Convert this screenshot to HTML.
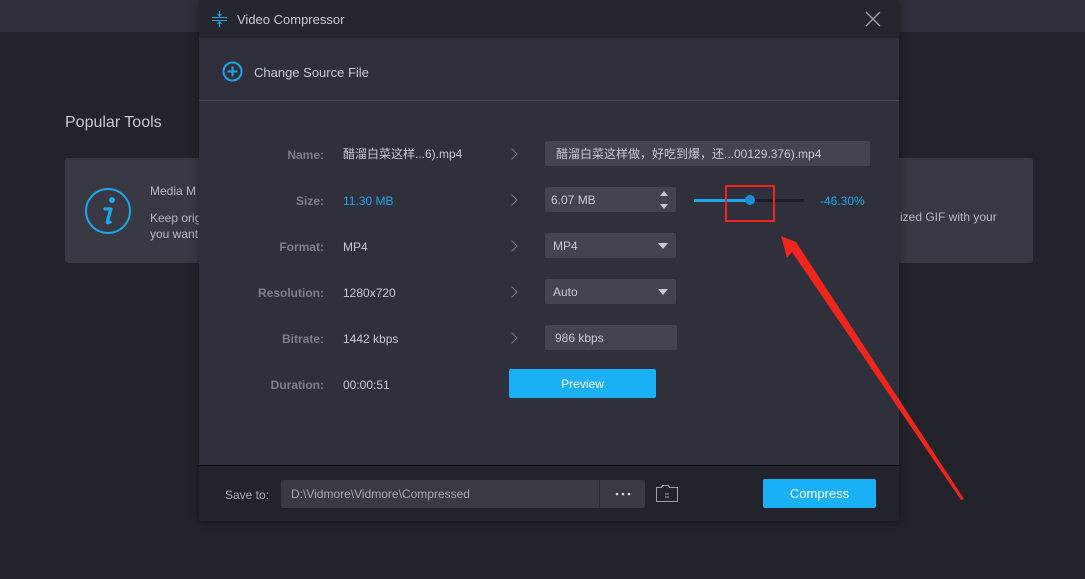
<!DOCTYPE html>
<html><head><meta charset="utf-8"><style>
*{margin:0;padding:0;box-sizing:border-box}
body{width:1085px;height:579px;background:#22232b;position:relative;overflow:hidden;font-family:"Liberation Sans","Noto Sans CJK SC",sans-serif;font-size:12px;color:#c9cad0}
.a{position:absolute}
.top{left:0;top:0;width:1085px;height:32px;background:#2f303b}
.card{left:65px;top:158px;width:968px;height:105px;background:#383942;border-radius:3px}
.dlg{left:199px;top:0;width:700px;height:521px;background:#2f303b;box-shadow:0 0 8px rgba(0,0,0,.4)}
.tb{left:0;top:0;width:700px;height:38px;background:#26272e}
.lbl{width:125px;text-align:right;font-weight:bold;color:#7e7f87;font-size:12px;line-height:14px}
.val{color:#c9cad0;line-height:14px}
.box{background:#43444e;border-radius:2px;height:25px;line-height:26px;padding-left:6px;color:#c9cad0}
.chev{width:8px;height:8px;border-right:1px solid #7e7f87;border-top:1px solid #7e7f87;transform:rotate(45deg)}
.tri{width:0;height:0;border-left:5px solid transparent;border-right:5px solid transparent;border-top:6px solid #c9cad0}
</style></head><body>
<div class="a top"></div>
<div class="a" style="left:65px;top:114px;font-size:16px;color:#c9cad0">Popular Tools</div>
<div class="a card">
 <svg class="a" style="left:20px;top:30px" width="48" height="48" viewBox="0 0 48 48"><circle cx="23" cy="23" r="22" fill="none" stroke="#1aa7ec" stroke-width="2"/><circle cx="27" cy="12" r="3" fill="#1aa7ec"/><path d="M20 21h6l-3.5 12q-1 3 2.5 1" fill="none" stroke="#1aa7ec" stroke-width="3.2" stroke-linejoin="round" stroke-linecap="round"/></svg>
 <div class="a" style="left:85px;top:26px;color:#b8b9c0">Media M</div>
 <div class="a" style="left:85px;top:52px;color:#b8b9c0;line-height:16px">Keep orig<br>you want</div>
 <div class="a" style="left:835px;top:52px;color:#b8b9c0">ized GIF with your</div>
</div>
<div class="a dlg">
 <div class="a tb"></div>
 <svg class="a" style="left:13px;top:11px" width="16" height="16" viewBox="0 0 16 16" stroke="#1aa7ec" stroke-width="1" fill="none"><path d="M0 6.5h15M0 9.5h15M7.5 0v5M5.5 3l2 2 2-2M7.5 11v5M5.5 13l2-2 2 2"/></svg>
 <div class="a" style="left:38px;top:12px;font-size:13px;color:#c9cad0">Video Compressor</div>
 <svg class="a" style="left:666px;top:11px" width="16" height="16" viewBox="0 0 16 16"><path d="M1 1L15 15M15 1L1 15" stroke="#a0a1a8" stroke-width="1.3"/></svg>
 <svg class="a" style="left:23px;top:61px" width="21" height="21" viewBox="0 0 21 21"><circle cx="10.5" cy="10.5" r="9" fill="none" stroke="#1aa7ec" stroke-width="2"/><path d="M10.5 5.5v10M5.5 10.5h10" stroke="#1aa7ec" stroke-width="2"/></svg>
 <div class="a" style="left:55px;top:65px;font-size:13px">Change Source File</div>
 <div class="a" style="left:0;top:100px;width:700px;height:1px;background:#474852"></div>

 <div class="a lbl" style="top:148px">Name:</div>
 <div class="a val" style="left:144px;top:147px">醋溜白菜这样...6).mp4</div>
 <div class="a chev" style="left:309px;top:150px"></div>
 <div class="a box" style="left:346px;top:141px;width:325px;padding-left:11px">醋溜白菜这样做，好吃到爆，还...00129.376).mp4</div>

 <div class="a lbl" style="top:194px">Size:</div>
 <div class="a val" style="left:144px;top:194px;color:#1aa7ec">11.30 MB</div>
 <div class="a chev" style="left:309px;top:196px"></div>
 <div class="a box" style="left:346px;top:187px;width:131px">6.07 MB</div>
 <div class="a" style="left:461px;top:191px;width:0;height:0;border-left:4px solid transparent;border-right:4px solid transparent;border-bottom:5px solid #c9cad0"></div>
 <div class="a" style="left:461px;top:204px;width:0;height:0;border-left:4px solid transparent;border-right:4px solid transparent;border-top:5px solid #c9cad0"></div>
 <div class="a" style="left:495px;top:199px;width:110px;height:3px;background:#1c1d22"></div>
 <div class="a" style="left:495px;top:199px;width:55px;height:3px;background:#1aa7ec"></div>
 <div class="a" style="left:546px;top:195px;width:10px;height:10px;border-radius:50%;background:#1a8fd6"></div>
 <div class="a" style="left:526px;top:185px;width:50px;height:37px;border:2px solid #f0261d"></div>
 <div class="a" style="left:621px;top:194px;color:#1aa7ec">-46.30%</div>

 <div class="a lbl" style="top:240px">Format:</div>
 <div class="a val" style="left:144px;top:240px">MP4</div>
 <div class="a chev" style="left:309px;top:242px"></div>
 <div class="a box" style="left:346px;top:233px;width:131px;padding-left:8px">MP4</div>
 <div class="a tri" style="left:459px;top:243px"></div>

 <div class="a lbl" style="top:286px">Resolution:</div>
 <div class="a val" style="left:144px;top:286px">1280x720</div>
 <div class="a chev" style="left:309px;top:288px"></div>
 <div class="a box" style="left:346px;top:279px;width:131px;padding-left:8px">Auto</div>
 <div class="a tri" style="left:459px;top:289px"></div>

 <div class="a lbl" style="top:332px">Bitrate:</div>
 <div class="a val" style="left:144px;top:332px">1442 kbps</div>
 <div class="a chev" style="left:309px;top:334px"></div>
 <div class="a box" style="left:346px;top:325px;width:132px;padding-left:10px">986 kbps</div>

 <div class="a lbl" style="top:378px">Duration:</div>
 <div class="a val" style="left:144px;top:378px">00:00:51</div>
 <div class="a" style="left:310px;top:369px;width:147px;height:29px;background:#1ab0f5;border-radius:2px;color:#fff;text-align:center;line-height:30px">Preview</div>

 <div class="a" style="left:0;top:465px;width:700px;height:56px;background:#23242b;border-top:1px solid #0e0e12"></div>
 <div class="a" style="left:26px;top:488px;color:#a9aab1">Save to:</div>
 <div class="a" style="left:82px;top:480px;width:364px;height:28px;background:#393a42;border-radius:2px;line-height:29px;padding-left:10px;color:#a9aab1">D:\Vidmore\Vidmore\Compressed</div>
 <div class="a" style="left:400px;top:480px;width:1px;height:28px;background:#2a2b31"></div>
 <svg class="a" style="left:416px;top:492px" width="16" height="4"><circle cx="2" cy="2" r="1.3" fill="#e0e0e0"/><circle cx="8" cy="2" r="1.3" fill="#e0e0e0"/><circle cx="14" cy="2" r="1.3" fill="#e0e0e0"/></svg>
 <svg class="a" style="left:456px;top:484px" width="24" height="19" viewBox="0 0 24 19" fill="none" stroke="#a0a1a8"><path d="M1.5 3.5h5l1-2h6l1 2h8v14h-21z"/><path d="M10 10h4M10 13h4"/></svg>
 <div class="a" style="left:564px;top:479px;width:113px;height:29px;background:#1ab0f5;border-radius:2px;color:#fff;text-align:center;line-height:30px;font-size:13px">Compress</div>
</div>
<svg class="a" style="left:0;top:0" width="1085" height="579"><path d="M781 236L796 242L964 499L961 500L792 252L787 258Z" fill="#f0261d"/></svg>
</body></html>
